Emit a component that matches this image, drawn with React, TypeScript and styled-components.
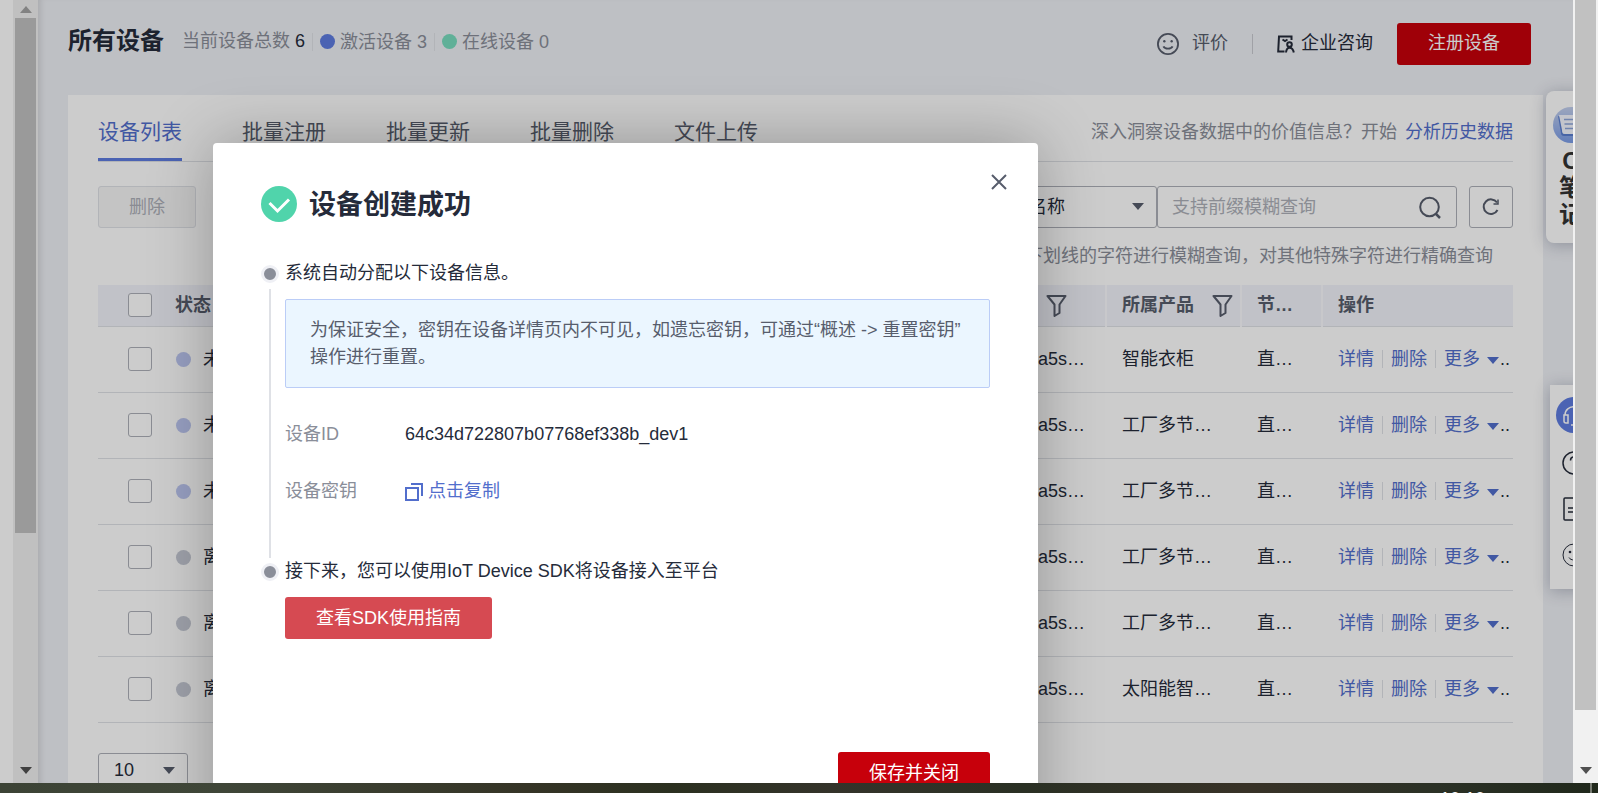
import React from 'react';
import styled, { createGlobalStyle } from 'styled-components';

const GlobalStyle = createGlobalStyle`
  * { box-sizing: border-box; }
  html, body { margin: 0; height: 100%; overflow: hidden; }
  body, button, input, select {
    font-family: "Liberation Sans", "Noto Sans CJK SC", sans-serif;
    font-size: 18px;
    line-height: 27px;
    color: #252b3a;
  }
  button, select, input { margin: 0; }
  button, select { cursor: pointer; }
  h1, h2, p, ol, dl, dd { margin: 0; padding: 0; }
  a { color: #526ecc; text-decoration: none; }
  svg { display: block; flex: none; }
`;

const Screen = styled.div`
  display: flex;
  flex-direction: column;
  height: 100vh;
  overflow: hidden;
`;

const Browser = styled.div`
  display: flex;
  flex: 1;
  min-height: 0;
`;

const Viewport = styled.div`
  position: relative;
  display: flex;
  flex: 1;
  min-width: 0;
  overflow: hidden;
  background: #fff;
`;

const Gutter = styled.div`
  flex: none;
  width: 13px;
`;

const ScrollTrack = styled.div`
  display: flex;
  flex-direction: column;
  align-items: center;
  flex: none;
  width: 25px;
  padding-bottom: 3px;
  background: #f1f1f1;
`;

const ScrollThumb = styled.div<{ $share: number }>`
  width: 21px;
  flex: 0 0 ${(p) => p.$share}%;
  background: #c1c1c1;
`;

const ScrollArrow = styled.span<{ $up?: boolean }>`
  height: 18px;
  width: 12px;
  display: flex;
  align-items: center;
  justify-content: center;
  transform: ${(p) => (p.$up ? 'rotate(180deg)' : 'none')};
  color: ${(p) => (p.$up ? '#a3a3a3' : '#505050')};
`;

const Spacer = styled.div`
  flex: 1;
`;

const Main = styled.main`
  flex: 1;
  min-width: 0;
  padding: 0 30px;
  background: #eef0f5;
  box-shadow: inset 6px 0 6px -4px rgba(0, 0, 0, 0.12);
`;

const Header = styled.header`
  display: flex;
  align-items: center;
  height: 95px;
  padding: 0 12px 12px 0;
`;

const Title = styled.h1`
  font-size: 24px;
  line-height: 30px;
  margin-right: 18px;
  padding-bottom: 2px;
`;

const Stat = styled.span`
  display: flex;
  align-items: center;
  gap: 5px;
  color: #8a8e99;

  & + & {
    margin-left: 7px;
    padding-left: 7px;
    border-left: 1px solid #dfe1e6;
    line-height: 18px;
  }

  b {
    font-weight: 400;
    color: #252b3a;
  }
`;

const Dot = styled.i<{ $color: string }>`
  flex: none;
  width: 15px;
  height: 15px;
  border-radius: 50%;
  background: ${(p) => p.$color};
`;

const HeaderActions = styled.div`
  display: flex;
  align-items: center;
  margin-left: auto;
  padding-top: 4px;
`;

const PlainButton = styled.button<{ $gap: number; $color: string }>`
  display: flex;
  align-items: center;
  gap: ${(p) => p.$gap}px;
  padding: 0;
  border: 0;
  background: none;
  color: ${(p) => p.$color};
`;

const HeaderRule = styled.span`
  width: 1px;
  height: 20px;
  margin: 0 24px;
  background: #c8cad0;
`;

const SolidButton = styled.button<{ $tone?: 'soft'; $spaced?: boolean }>`
  height: 42px;
  padding: 0 31px;
  margin-left: ${(p) => (p.$spaced ? 24 : 0)}px;
  border: 0;
  border-radius: 3px;
  background: ${(p) => (p.$tone === 'soft' ? '#d64a52' : '#c7000b')};
  color: #fff;
`;

const Card = styled.section`
  padding: 0 30px 60px;
  background: #fff;
`;

const TabRow = styled.div`
  display: flex;
  align-items: flex-start;
  height: 67px;
  border-bottom: 1px solid #dfe1e6;
`;

const Tabs = styled.nav`
  display: flex;
  gap: 60px;
`;

const Tab = styled.a<{ $active?: boolean }>`
  height: 66px;
  padding-top: 22px;
  font-size: 21px;
  line-height: 30px;
  color: ${(p) => (p.$active ? '#526ecc' : '#575d6c')};
  border-bottom: 3px solid ${(p) => (p.$active ? '#5e7ce0' : 'transparent')};
`;

const Insight = styled.p`
  margin-left: auto;
  padding-top: 24px;
  color: #8a8e99;

  a { margin-left: 8px; }
`;

const Toolbar = styled.div`
  display: flex;
  padding-top: 24px;
`;

const DisabledButton = styled.button`
  width: 98px;
  height: 42px;
  border: 1px solid #dfe1e6;
  border-radius: 3px;
  background: #f5f5f6;
  color: #adb0b8;
`;

const SelectBox = styled.span<{ $width: number; $height: number }>`
  position: relative;
  display: flex;
  align-items: center;
  width: ${(p) => p.$width}px;
  color: #575d6c;

  select {
    width: 100%;
    height: ${(p) => p.$height}px;
    padding: 0 15px;
    appearance: none;
    border: 1px solid #adb0b8;
    border-radius: 3px;
    background: transparent;
  }

  svg {
    position: absolute;
    right: 13px;
    pointer-events: none;
  }
`;

const SearchGroup = styled.div`
  display: flex;
  margin-left: auto;
  margin-right: 12px;
`;

const SearchBox = styled.label`
  display: flex;
  align-items: center;
  width: 300px;
  height: 42px;
  padding: 0 14px;
  border: 1px solid #adb0b8;
  border-radius: 3px;
  color: #575d6c;

  input {
    flex: 1;
    min-width: 0;
    padding: 0;
    border: 0;
    outline: 0;
    background: none;
  }

  input::placeholder { color: #adb0b8; opacity: 1; }
`;

const IconButton = styled.button<{ $bordered?: boolean }>`
  display: flex;
  align-items: center;
  justify-content: center;
  width: ${(p) => (p.$bordered ? 44 : 24)}px;
  height: ${(p) => (p.$bordered ? 42 : 24)}px;
  padding: 0;
  border: ${(p) => (p.$bordered ? '1px solid #adb0b8' : '0')};
  border-radius: 3px;
  background: none;
  color: #575d6c;
`;

const Hint = styled.p`
  padding: 15px 20px 15px;
  text-align: right;
  color: #8a8e99;
`;

const DeviceTable = styled.table`
  width: 100%;
  table-layout: fixed;
  border-collapse: collapse;

  th, td {
    padding: 0 0 0 16px;
    text-align: left;
    border-bottom: 1px solid #dfe1e6;
    white-space: nowrap;
  }

  th {
    height: 41px;
    padding-left: 15px;
    background: #f2f3fa;
    color: #575d6c;
    line-height: 24px;
  }

  th:first-child, td:first-child {
    padding-left: 30px;
  }

  th + th + th {
    border-left: 2px solid #fafbfe;
  }

  td { height: 66px; }
`;

const Inline = styled.span<{ $gap: number }>`
  display: flex;
  align-items: center;
  gap: ${(p) => p.$gap}px;
`;

const FilterButton = styled(IconButton)`
  width: 36px;
`;

const Check = styled.input`
  display: block;
  width: 24px;
  height: 24px;
  appearance: none;
  border: 1px solid #adb0b8;
  border-radius: 3px;
  background: #fff;
`;

const Operations = styled.span`
  display: flex;
  align-items: center;
  overflow: hidden;

  a + a {
    margin-left: 8px;
    padding-left: 8px;
    border-left: 1px solid #dfe1e6;
    line-height: 18px;
  }

  svg { margin: 3px 1px 0 7px; }
`;

const Pager = styled.div`
  display: flex;
  padding-top: 30px;
`;

const Floating = styled.aside<{ $top: number; $width: number; $round?: boolean }>`
  position: absolute;
  top: ${(p) => p.$top}px;
  left: calc(100% - ${(p) => (p.$round ? 27 : 23)}px);
  display: flex;
  flex-direction: column;
  align-items: center;
  width: ${(p) => p.$width}px;
  padding: ${(p) => (p.$round ? '16px 0 15px' : '12px 0 22px')};
  border-radius: ${(p) => (p.$round ? 8 : 0)}px;
  background: #fff;
  box-shadow: 0 2px 16px rgba(40, 50, 80, 0.3);
`;

const NoteLabel = styled.span`
  display: flex;
  flex-direction: column;
  align-items: center;
  padding-top: 4px;
  font-size: 24px;
  font-weight: 700;
  line-height: 27px;
  color: #333;
`;

const SideButton = styled(IconButton)`
  margin-top: 22px;
  color: #252b3a;
`;

const ServiceButton = styled(IconButton)`
  width: 36px;
  height: 36px;
  border-radius: 50%;
  background: #5e7ce0;
  color: #fff;
  margin-bottom: -4px;
`;

const Overlay = styled.div`
  position: absolute;
  inset: 0;
  display: flex;
  padding: 143px 0 0 213px;
  background: rgba(0, 0, 0, 0.2);
`;

const Dialog = styled.div`
  flex: none;
  width: 825px;
  height: 720px;
  padding: 0 48px;
  border-radius: 4px;
  background: #fff;
  box-shadow: 0 0 64px rgba(0, 0, 0, 0.28);
`;

const DialogHead = styled.div`
  display: flex;
  align-items: center;
  gap: 12px;
  padding: 43px 0 38px;

  h2 {
    padding-top: 2px;
    font-size: 27px;
    line-height: 34px;
  }
`;

const CloseButton = styled(IconButton)`
  align-self: flex-start;
  margin: -16px -21px 0 auto;
`;

const Steps = styled.ol`
  list-style: none;
`;

const Step = styled.li`
  display: grid;
  grid-template-columns: 18px minmax(0, 1fr);
  column-gap: 6px;
`;

const Rail = styled.div`
  display: flex;
  flex-direction: column;
  align-items: center;
  gap: 6px;
  padding-top: 5px;
`;

const Marker = styled.span`
  width: 18px;
  height: 18px;
  border: 3px solid #eff0f5;
  border-radius: 50%;
  background: #8a8e99;
`;

const Line = styled.span`
  flex: 1;
  width: 2px;
  background: #dfe1e6;
`;

const StepBody = styled.div<{ $last?: boolean }>`
  padding-bottom: ${(p) => (p.$last ? 113 : 53)}px;
`;

const Notice = styled.p`
  margin: 12px 0 33px;
  padding: 17px 20px 16px 24px;
  border: 1px solid #bbcdf7;
  border-radius: 2px;
  background: #ebf6ff;
  color: #575d6c;
`;

const Facts = styled.dl`
  display: grid;
  grid-template-columns: 120px minmax(0, 1fr);
  row-gap: 30px;

  dt { color: #8a8e99; }
`;

const CopyLink = styled.a`
  display: flex;
  align-items: center;
  gap: 5px;
`;

const GuideButton = styled(SolidButton)`
  display: block;
  margin-top: 12px;
`;

const DialogFoot = styled.div`
  display: flex;
  justify-content: flex-end;
`;

const Desktop = styled.footer`
  display: flex;
  justify-content: flex-end;
  flex: none;
  height: 10px;
  overflow: hidden;
  background: linear-gradient(90deg, #3c4335 0%, #3f4638 14%, #353426 33%, #2b3020 42%, #34332a 52%, #2a3024 64%, #383227 78%, #2b3126 90%, #20281b 100%);
`;

const Clock = styled.time`
  padding: 6px 105px 0 0;
  line-height: 20px;
  color: #fff;
`;

const DesktopEdge = styled.span`
  width: 2px;
  margin-right: 6px;
  background: #777b72;
`;

const Caret = () => (
  <svg width="12" height="8" viewBox="0 0 12 8" fill="currentColor" aria-hidden="true">
    <path d="M0 0h12L6 7z" />
  </svg>
);

const SmileIcon = ({ size, stroke = 2 }: { size: number; stroke?: number }) => (
  <svg width={size} height={size} viewBox="0 0 24 24" fill="none" stroke="currentColor" strokeWidth={stroke}>
    <circle cx="12" cy="12" r="11" />
    <path d="M7 14.500c1.500 3.300 8.500 3.300 10 0" />
    <circle cx="8" cy="9" r="1.300" fill="currentColor" stroke="none" />
    <circle cx="16" cy="9" r="1.300" fill="currentColor" stroke="none" />
  </svg>
);

const ConsultIcon = () => (
  <svg width="18" height="18" viewBox="0 0 18 18" fill="none" stroke="currentColor" strokeWidth="2">
    <path d="M7.500 16.500H1.200L2 1.500h12.500V5" />
    <path d="M5.500 4.500l2.500 1.500L10.500 4.500" />
    <circle cx="12.500" cy="9.500" r="2.300" />
    <path d="M9 17.500c.3-3 1.300-4.800 3.500-4.800s3.700 1.300 4.300 4.800" />
  </svg>
);

const SearchIcon = () => (
  <svg width="24" height="24" viewBox="0 0 24 24" fill="none" stroke="currentColor" strokeWidth="2">
    <circle cx="11.500" cy="12" r="9.300" />
    <path d="M17.500 18.500l4.500 4.500" strokeWidth="2.500" />
  </svg>
);

const RefreshIcon = () => (
  <svg width="18" height="18" viewBox="0 0 18 18" fill="none" stroke="currentColor" strokeWidth="2">
    <path d="M15 4.500A7.300 7.300 0 1 0 15.500 12" />
    <path d="M16 1.500v4.500h-4.500" strokeWidth="1.500" />
  </svg>
);

const FilterIcon = () => (
  <svg width="21" height="23" viewBox="0 0 21 23" fill="none" stroke="currentColor" strokeWidth="2" strokeLinejoin="round">
    <path d="M1.500 2h18l-6 8.500v8.500l-5 3V10.500z" />
  </svg>
);

const CopyIcon = () => (
  <svg width="18" height="18" viewBox="0 0 18 18" fill="none" stroke="currentColor" strokeWidth="2">
    <path d="M1 5h12v12H1zM6 1h11v12" />
  </svg>
);

const SuccessIcon = () => (
  <svg width="36" height="36" viewBox="0 0 36 36">
    <circle cx="18" cy="18" r="18" fill="#50d4ab" />
    <path d="M8.500 17l8 8L28 13.500" fill="none" stroke="#fff" strokeWidth="3" />
  </svg>
);

const NotebookIcon = () => (
  <svg width="36" height="36" viewBox="0 0 36 36">
    <defs>
      <linearGradient id="noteFill" x1="0" y1="0" x2="0" y2="1">
        <stop offset="0" stopColor="#c3d0ee" />
        <stop offset="1" stopColor="#7b9de8" />
      </linearGradient>
    </defs>
    <circle cx="18" cy="18" r="18" fill="url(#noteFill)" />
    <path d="M5 9l3 1 2 17h20v2H11c-2 0-3-1-3-3z" fill="#5b7fd0" />
    <path d="M6 8h22c2 0 2 2 2 4v15H12c-2 0-3-1-3-4z" fill="#f4f7ff" />
    <path d="M11 12.500h12M11.500 17h12M12 21.500h10" stroke="#8da5da" strokeWidth="1.500" />
  </svg>
);

const HeadsetIcon = () => (
  <svg width="24" height="24" viewBox="0 0 24 24" fill="none" stroke="currentColor" strokeWidth="1.500">
    <path d="M3 12C3 1 21 1 21 12M2 12h4v8H4q-2 0-2-2zM22 12h-4v8h2q2 0 2-2zM9 22h6" />
  </svg>
);

const HelpIcon = () => (
  <svg width="24" height="24" viewBox="0 0 24 24" fill="none" stroke="currentColor" strokeWidth="1.500">
    <circle cx="12" cy="12" r="11" />
    <path d="M8.500 9.500c0-5 7-4.500 7-.5 0 2.500-3.500 3-3.500 5.500M12 17v2" />
  </svg>
);

const DocIcon = () => (
  <svg width="24" height="24" viewBox="0 0 24 24" fill="none" stroke="currentColor" strokeWidth="1.500">
    <rect x="2" y="1" width="20" height="22" rx="1" />
    <path d="M6 11h12M6 15h12" />
  </svg>
);

const CloseIcon = () => (
  <svg width="16" height="16" viewBox="0 0 16 16" stroke="currentColor" strokeWidth="2">
    <path d="M1 1l14 14M15 1L1 15" />
  </svg>
);

const devices = [
  { status: '未激活', color: '#bcc6f0', product: '智能衣柜' },
  { status: '未激活', color: '#bcc6f0', product: '工厂多节…' },
  { status: '未激活', color: '#bcc6f0', product: '工厂多节…' },
  { status: '离线', color: '#c5c9d4', product: '工厂多节…' },
  { status: '离线', color: '#c5c9d4', product: '工厂多节…' },
  { status: '离线', color: '#c5c9d4', product: '太阳能智…' },
];

const tabs = ['设备列表', '批量注册', '批量更新', '批量删除', '文件上传'];

const Devices = () => (
  <DeviceTable>
    <colgroup>
      <col style={{ width: 62 }} />
      <col />
      <col style={{ width: 84 }} />
      <col style={{ width: 135 }} />
      <col style={{ width: 81 }} />
      <col style={{ width: 191 }} />
    </colgroup>
    <thead>
      <tr>
        <th><Check type="checkbox" aria-label="全选" /></th>
        <th>状态</th>
        <th><FilterButton aria-label="筛选"><FilterIcon /></FilterButton></th>
        <th>
          <Inline $gap={10}>
            所属产品
            <FilterButton aria-label="筛选产品"><FilterIcon /></FilterButton>
          </Inline>
        </th>
        <th>节…</th>
        <th>操作</th>
      </tr>
    </thead>
    <tbody>
      {devices.map((d, i) => (
        <tr key={i}>
          <td><Check type="checkbox" aria-label={d.status} /></td>
          <td><Inline $gap={12}><Dot $color={d.color} />{d.status}</Inline></td>
          <td>a5s…</td>
          <td>{d.product}</td>
          <td>直…</td>
          <td>
            <Operations>
              <a href="#detail">详情</a>
              <a href="#delete">删除</a>
              <a href="#more"><Inline $gap={0}>更多<Caret /></Inline></a>
              ..
            </Operations>
          </td>
        </tr>
      ))}
    </tbody>
  </DeviceTable>
);

const SuccessDialog = () => (
  <Dialog role="dialog" aria-modal="true" aria-labelledby="dialog-title">
    <DialogHead>
      <SuccessIcon />
      <h2 id="dialog-title">设备创建成功</h2>
      <CloseButton aria-label="关闭"><CloseIcon /></CloseButton>
    </DialogHead>
    <Steps>
      <Step>
        <Rail><Marker /><Line /></Rail>
        <StepBody>
          <p>系统自动分配以下设备信息。</p>
          <Notice>
            为保证安全，密钥在设备详情页内不可见，如遗忘密钥，可通过“概述 -&gt; 重置密钥”<wbr />操作进行重置。
          </Notice>
          <Facts>
            <dt>设备ID</dt>
            <dd>64c34d722807b07768ef338b_dev1</dd>
            <dt>设备密钥</dt>
            <dd><CopyLink href="#copy"><CopyIcon />点击复制</CopyLink></dd>
          </Facts>
        </StepBody>
      </Step>
      <Step>
        <Rail><Marker /></Rail>
        <StepBody $last>
          <p>接下来，您可以使用IoT Device SDK将设备接入至平台</p>
          <GuideButton $tone="soft">查看SDK使用指南</GuideButton>
        </StepBody>
      </Step>
    </Steps>
    <DialogFoot><SolidButton>保存并关闭</SolidButton></DialogFoot>
  </Dialog>
);

export default function App() {
  return (
    <Screen>
      <GlobalStyle />
      <Browser>
        <Viewport>
          <Gutter />
          <ScrollTrack>
            <ScrollArrow $up><Caret /></ScrollArrow>
            <ScrollThumb $share={66} />
            <Spacer />
            <ScrollArrow><Caret /></ScrollArrow>
          </ScrollTrack>
          <Main>
            <Header>
              <Title>所有设备</Title>
              <Stat>当前设备总数 <b>6</b></Stat>
              <Stat><Dot $color="#5e7ce0" />激活设备 3</Stat>
              <Stat><Dot $color="#78dcbe" />在线设备 0</Stat>
              <HeaderActions>
                <PlainButton $gap={13} $color="#575d6c"><SmileIcon size={22} />评价</PlainButton>
                <HeaderRule />
                <PlainButton $gap={6} $color="#252b3a"><ConsultIcon />企业咨询</PlainButton>
                <SolidButton $spaced>注册设备</SolidButton>
              </HeaderActions>
            </Header>
            <Card>
              <TabRow>
                <Tabs>
                  {tabs.map((t, i) => (
                    <Tab key={t} href={`#tab-${i}`} $active={i === 0}>{t}</Tab>
                  ))}
                </Tabs>
                <Insight>
                  深入洞察设备数据中的价值信息？开始<a href="#history">分析历史数据</a>
                </Insight>
              </TabRow>
              <Toolbar>
                <DisabledButton disabled>删除</DisabledButton>
                <SearchGroup>
                  <SelectBox $width={180} $height={42}>
                    <select aria-label="查询条件"><option>设备名称</option></select>
                    <Caret />
                  </SelectBox>
                  <SearchBox>
                    <input type="text" placeholder="支持前缀模糊查询" aria-label="查询" />
                    <SearchIcon />
                  </SearchBox>
                </SearchGroup>
                <IconButton $bordered aria-label="刷新"><RefreshIcon /></IconButton>
              </Toolbar>
              <Hint>下划线的字符进行模糊查询，对其他特殊字符进行精确查询</Hint>
              <Devices />
              <Pager>
                <SelectBox $width={90} $height={36}>
                  <select aria-label="每页条数"><option>10</option></select>
                  <Caret />
                </SelectBox>
              </Pager>
            </Card>
          </Main>
          <Floating $top={91} $width={50} $round>
            <NotebookIcon />
            <NoteLabel><span>C</span><span>笔</span><span>记</span></NoteLabel>
          </Floating>
          <Floating $top={385} $width={48}>
            <ServiceButton aria-label="客服"><HeadsetIcon /></ServiceButton>
            <SideButton aria-label="帮助"><HelpIcon /></SideButton>
            <SideButton aria-label="文档"><DocIcon /></SideButton>
            <SideButton aria-label="评价"><SmileIcon size={24} stroke={1} /></SideButton>
          </Floating>
          <Overlay><SuccessDialog /></Overlay>
        </Viewport>
        <ScrollTrack>
          <ScrollThumb $share={91} />
          <Spacer />
          <ScrollArrow><Caret /></ScrollArrow>
        </ScrollTrack>
      </Browser>
      <Desktop>
        <Clock>10:10</Clock>
        <DesktopEdge />
      </Desktop>
    </Screen>
  );
}
